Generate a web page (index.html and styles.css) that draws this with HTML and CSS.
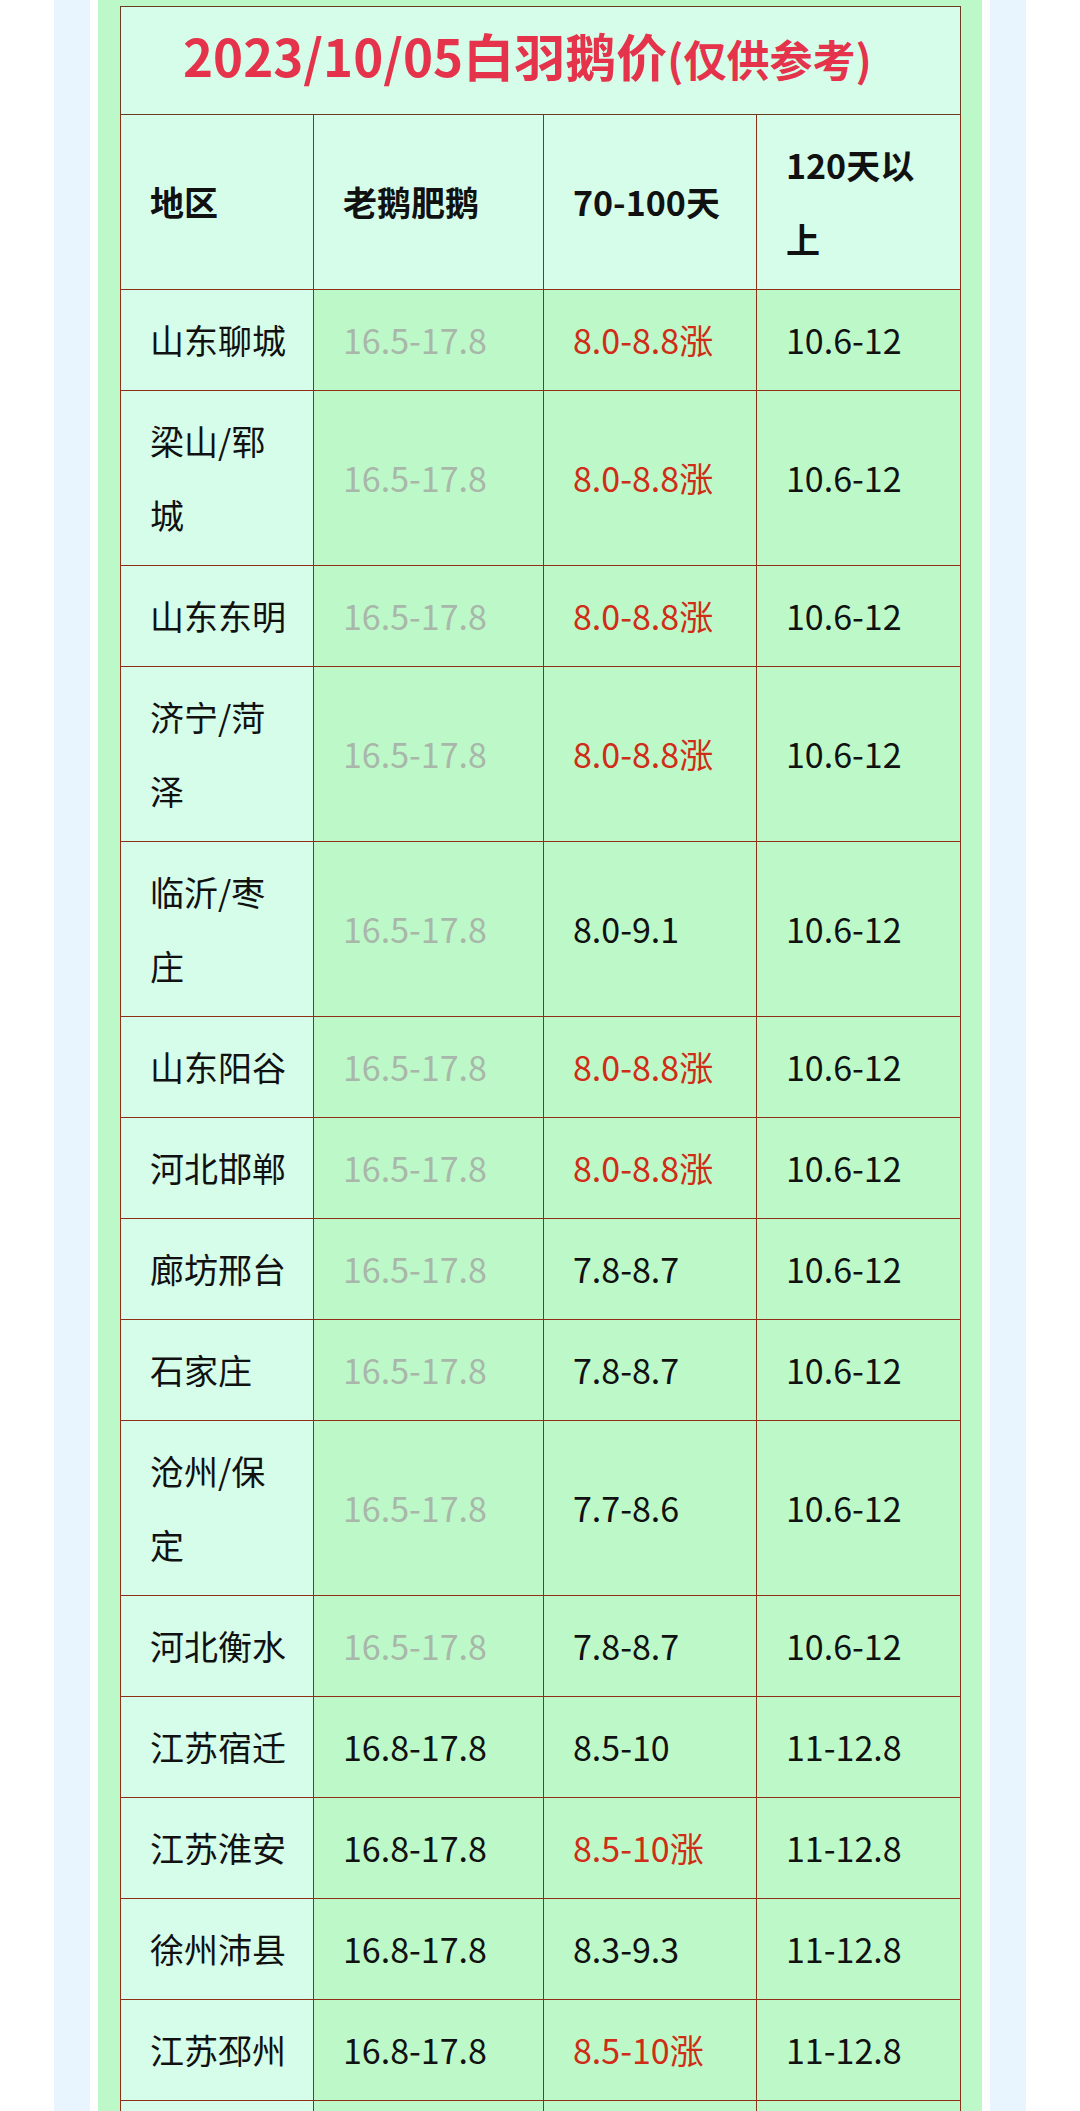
FILE: index.html
```html
<!DOCTYPE html>
<html lang="zh-CN">
<head>
<meta charset="utf-8">
<title>2023/10/05白羽鹅价</title>
<link rel="stylesheet" href="styles.css">
</head>
<body>
<div class="page">
  <div class="strip">
    <div class="gap">
      <div class="board">
        <table class="prices">
          <colgroup>
            <col class="c1"><col class="c2"><col class="c3"><col class="c4">
          </colgroup>
          <tr>
            <td class="title" colspan="4"><span class="t-main">2023/10/05白羽鹅价</span><span class="t-sub">(仅供参考)</span></td>
          </tr>
          <tr class="head">
            <td>地区</td><td>老鹅肥鹅</td><td>70-100天</td><td>120天以上</td>
          </tr>
          <tr><td class="area">山东聊城</td><td class="gray">16.5-17.8</td><td class="up">8.0-8.8涨</td><td>10.6-12</td></tr>
          <tr><td class="area">梁山/郓城</td><td class="gray">16.5-17.8</td><td class="up">8.0-8.8涨</td><td>10.6-12</td></tr>
          <tr><td class="area">山东东明</td><td class="gray">16.5-17.8</td><td class="up">8.0-8.8涨</td><td>10.6-12</td></tr>
          <tr><td class="area">济宁/菏泽</td><td class="gray">16.5-17.8</td><td class="up">8.0-8.8涨</td><td>10.6-12</td></tr>
          <tr><td class="area">临沂/枣庄</td><td class="gray">16.5-17.8</td><td>8.0-9.1</td><td>10.6-12</td></tr>
          <tr><td class="area">山东阳谷</td><td class="gray">16.5-17.8</td><td class="up">8.0-8.8涨</td><td>10.6-12</td></tr>
          <tr><td class="area">河北邯郸</td><td class="gray">16.5-17.8</td><td class="up">8.0-8.8涨</td><td>10.6-12</td></tr>
          <tr><td class="area">廊坊邢台</td><td class="gray">16.5-17.8</td><td>7.8-8.7</td><td>10.6-12</td></tr>
          <tr><td class="area">石家庄</td><td class="gray">16.5-17.8</td><td>7.8-8.7</td><td>10.6-12</td></tr>
          <tr><td class="area">沧州/保定</td><td class="gray">16.5-17.8</td><td>7.7-8.6</td><td>10.6-12</td></tr>
          <tr><td class="area">河北衡水</td><td class="gray">16.5-17.8</td><td>7.8-8.7</td><td>10.6-12</td></tr>
          <tr><td class="area">江苏宿迁</td><td>16.8-17.8</td><td>8.5-10</td><td>11-12.8</td></tr>
          <tr><td class="area">江苏淮安</td><td>16.8-17.8</td><td class="up">8.5-10涨</td><td>11-12.8</td></tr>
          <tr><td class="area">徐州沛县</td><td>16.8-17.8</td><td>8.3-9.3</td><td>11-12.8</td></tr>
          <tr><td class="area">江苏邳州</td><td>16.8-17.8</td><td class="up">8.5-10涨</td><td>11-12.8</td></tr>
          <tr class="more"><td class="area"></td><td></td><td></td><td></td></tr>
        </table>
      </div>
    </div>
  </div>
</div>
</body>
</html>
```

FILE: styles.css
```css
html, body {
  margin: 0;
  padding: 0;
  background: #ffffff;
}

body {
  font-family: "Noto Sans CJK SC", "Noto Sans", sans-serif;
  color: #111111;
}

.page {
  padding: 0 54px;
  height: 2111px;
  overflow: hidden;
}

.strip {
  background: #e8f5fe;
  padding: 0 36px;
}

.gap {
  background: #ffffff;
  padding: 0 8px;
}

.board {
  background: #bdf9c8;
  padding: 6px 22px 0;
}

.prices {
  width: 840px;
  border-collapse: collapse;
  table-layout: fixed;
  border: 1px solid #6b3c22;
}

.c1 { width: 193px; }
.c2 { width: 230px; }
.c3 { width: 213px; }
.c4 { width: 204px; }

.prices td {
  border: 1px solid #8e2f16;
  padding: 13px 18px 13px 29px;
  font-size: 34px;
  line-height: 74px;
  vertical-align: middle;
  background: #bdf9c8;
}

.prices tr.more td {
  height: 74px;
}

.prices td.area,
.prices tr.head td,
.prices td.title {
  background: #d6fdea;
}

.prices td.title {
  height: 107px;
  box-sizing: border-box;
  padding: 0 0 10px 62px;
  font-size: 51px;
  line-height: 97px;
  color: #e4334b;
  font-weight: 700;
  border-color: #6b3c22;
}

.t-main {
  font-size: 51px;
  line-height: 1;
}

.t-sub {
  font-size: 43px;
  line-height: 1;
}

.prices tr.head td {
  font-weight: 700;
}

.prices td.gray {
  color: #a9b7aa;
}

.prices td.up {
  color: #cf2d17;
}
```
